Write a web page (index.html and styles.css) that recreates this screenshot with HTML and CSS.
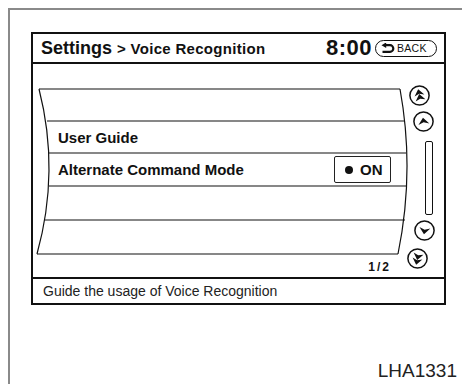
FILE: index.html
```html
<!DOCTYPE html>
<html>
<head>
<meta charset="utf-8">
<link rel="stylesheet" href="styles.css">
</head>
<body>
<div class="page">
  <div class="screen">
    <div class="header">
      <div class="title"><span class="t-main">Settings</span><span class="t-sub">&gt; Voice Recognition</span></div>
      <div class="clock">8:00</div>
      <div class="back">
        <svg class="back-ico" width="14" height="11" viewBox="0 0 14 11">
          <path d="M4.5 2.2 H9 A3.3 3.3 0 0 1 9 8.8 H1.5" fill="none" stroke="#111" stroke-width="2.2"/>
          <path d="M0.5 2.2 L5.2 -0.6 L5.2 5 Z" fill="#111"/>
        </svg>
        <span class="back-txt">BACK</span>
      </div>
    </div>
    <div class="main">
      <div class="list">
        <svg class="list-lines" width="380" height="213" viewBox="0 0 380 213">
          <g fill="none" stroke="#111" stroke-width="1.2">
            <path d="M6 25 Q27 107 4 190"/>
            <path d="M367 25 Q382 107 365 190"/>
            <path d="M6 25 H367"/>
            <path d="M14 57 H371"/>
            <path d="M16 89 H373"/>
            <path d="M16 122 H374"/>
            <path d="M12 156 H372"/>
            <path d="M4 190 H365"/>
          </g>
        </svg>
        <div class="row r1"></div>
        <div class="row r2"><span class="label">User Guide</span></div>
        <div class="row r3"><span class="label">Alternate Command Mode</span><span class="toggle"><span class="dot"></span>ON</span></div>
        <div class="row r4"></div>
        <div class="row r5"></div>
        <div class="page-no">1/2</div>
      </div>
      <div class="scroll">
        <div class="btn b1">
          <svg width="21" height="21" viewBox="-10.5 -10.5 21 21"><circle r="9.6" fill="#fff" stroke="#111" stroke-width="1.5"/><path d="M0 -6.5 L5 0 L0 -1.8 L-5 0 Z M0 -1.5 L5 5 L0 3.2 L-5 5 Z" fill="#111" transform="rotate(-12)"/></svg>
        </div>
        <div class="btn b2">
          <svg width="21" height="21" viewBox="-10.5 -10.5 21 21"><circle r="9.6" fill="#fff" stroke="#111" stroke-width="1.5"/><path d="M0 -3.8 L5.5 2.8 L0 0.8 L-5.5 2.8 Z" fill="#111" transform="rotate(-8)"/></svg>
        </div>
        <div class="bar"></div>
        <div class="btn b3">
          <svg width="21" height="21" viewBox="-10.5 -10.5 21 21"><circle r="9.6" fill="#fff" stroke="#111" stroke-width="1.5"/><path d="M0 3.8 L5.5 -2.8 L0 -0.8 L-5.5 -2.8 Z" fill="#111" transform="rotate(8)"/></svg>
        </div>
        <div class="btn b4">
          <svg width="21" height="21" viewBox="-10.5 -10.5 21 21"><circle r="9.6" fill="#fff" stroke="#111" stroke-width="1.5"/><path d="M0 6.5 L5 0 L0 1.8 L-5 0 Z M0 1.5 L5 -5 L0 -3.2 L-5 -5 Z" fill="#111" transform="rotate(12)"/></svg>
        </div>
      </div>
    </div>
    <div class="footer">Guide the usage of Voice Recognition</div>
  </div>
  <div class="code">LHA1331</div>
</div>
</body>
</html>
```

FILE: styles.css
```css
html, body {
  margin: 0;
  padding: 0;
  background: #fff;
}
body {
  font-family: "Liberation Sans", Arial, sans-serif;
  color: #111;
  overflow: hidden;
}
.page {
  margin: 8px 0 0 8px;
  border-left: 2px solid #8a8a8a;
  border-top: 2px solid #8a8a8a;
  height: 376px;
  box-sizing: border-box;
  padding: 22px 0 0 21px;
  display: flex;
  flex-direction: column;
}
.screen {
  width: 415px;
  height: 273px;
  border: 2px solid #111;
  box-sizing: border-box;
  display: flex;
  flex-direction: column;
}
.header {
  height: 30px;
  border-bottom: 2px solid #111;
  box-sizing: border-box;
  display: flex;
  align-items: center;
  padding: 0 7px 0 8px;
}
.title {
  flex: 1;
  font-weight: bold;
  white-space: nowrap;
}
.t-main {
  font-size: 18px;
  margin-right: 5px;
}
.t-sub {
  font-size: 15px;
  letter-spacing: 0.3px;
}
.clock {
  font-size: 22px;
  font-weight: bold;
  letter-spacing: 0.5px;
  margin-right: 3px;
}
.back {
  width: 62px;
  height: 17px;
  border: 1.5px solid #111;
  border-radius: 9px;
  box-sizing: border-box;
  display: flex;
  align-items: center;
  padding-left: 5px;
}
.back-ico {
  display: block;
  margin-right: 2px;
}
.back-txt {
  font-size: 10.5px;
  letter-spacing: 0.3px;
}
.main {
  height: 213px;
  display: flex;
}
.list {
  position: relative;
  width: 374px;
  padding-top: 25px;
  box-sizing: border-box;
}
.list-lines {
  position: absolute;
  left: 0;
  top: 0;
}
.row {
  position: relative;
  width: 358px;
  padding-left: 25px;
  box-sizing: border-box;
  display: flex;
  align-items: center;
  font-size: 15px;
  font-weight: bold;
}
.r1 { height: 32px; }
.r2 { height: 32px; }
.r3 { height: 33px; }
.r4 { height: 34px; }
.r5 { height: 34px; }
.toggle {
  margin-left: auto;
  width: 57px;
  height: 27px;
  border: 1.5px solid #222;
  border-radius: 2px;
  box-sizing: border-box;
  display: flex;
  align-items: center;
  padding-left: 10px;
  font-size: 15px;
  font-weight: bold;
}
.dot {
  width: 8px;
  height: 8px;
  border-radius: 50%;
  background: #111;
  margin-right: 7px;
}
.page-no {
  position: relative;
  width: 358px;
  text-align: right;
  font-size: 12px;
  font-weight: bold;
  letter-spacing: 2px;
  margin-top: 6px;
}
.scroll {
  display: flex;
  flex-direction: column;
  align-items: flex-start;
}
.btn svg { display: block; }
.b1 { margin: 21px 0 0 2px; }
.b2 { margin: 5px 0 0 6px; }
.bar {
  margin: 9px 0 0 18px;
  width: 8px;
  height: 74px;
  border: 1.5px solid #111;
  border-radius: 2px;
  box-sizing: border-box;
}
.b3 { margin: 5px 0 0 7px; }
.b4 { margin: 7px 0 0 0; }
.footer {
  height: 26px;
  border-top: 2px solid #111;
  box-sizing: border-box;
  padding-left: 10px;
  display: flex;
  align-items: center;
  font-size: 14px;
  color: #222;
}
.code {
  margin-top: auto;
  align-self: flex-end;
  font-size: 19px;
  color: #222;
  margin-right: 5px;
  margin-bottom: 2px;
}
```
